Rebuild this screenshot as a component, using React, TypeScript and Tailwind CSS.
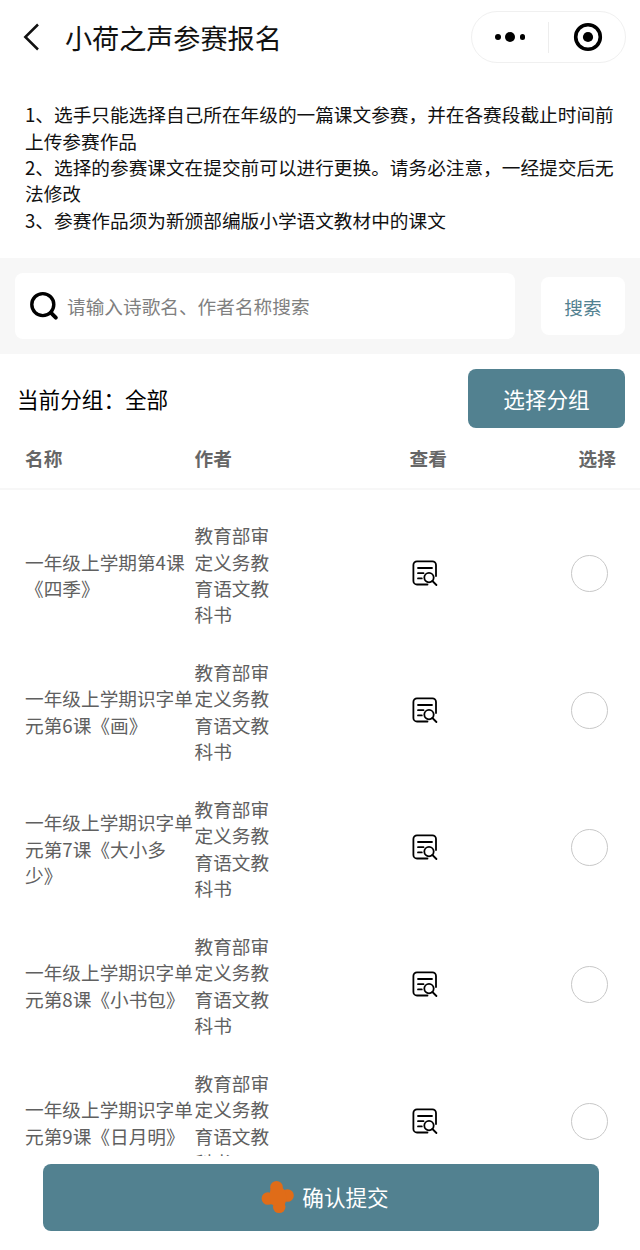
import React from 'react';

type Lesson = { name: string; author: string };

const author = '教育部审定义务教育语文教科书';

const lessons: Lesson[] = [
  { name: '一年级上学期第4课《四季》', author },
  { name: '一年级上学期识字单元第6课《画》', author },
  { name: '一年级上学期识字单元第7课《大小多少》', author },
  { name: '一年级上学期识字单元第8课《小书包》', author },
  { name: '一年级上学期识字单元第9课《日月明》', author },
];

function ViewIcon() {
  return (
    <svg width="26" height="26" viewBox="0 0 26 26" fill="none" stroke="#000" strokeWidth="1.8" strokeLinecap="round">
      <path d="M15.500 24.500H5a3.600 3.600 0 0 1-3.600-3.600V5A3.600 3.600 0 0 1 5 1.400h15.400A3.600 3.600 0 0 1 24 5v11" />
      <path d="M6 8h14M6 13.200h5.500M6 18.400h3.800" />
      <circle cx="17" cy="17.600" r="4.700" />
      <path d="M20.400 21l4 4" />
    </svg>
  );
}

function Row({ lesson }: { lesson: Lesson }) {
  return (
    <li className="flex h-[136.900px] shrink-0 items-center pl-[25px]">
      <div className="w-[169.500px] shrink-0">{lesson.name}</div>
      <div className="w-[76px] shrink-0">{lesson.author}</div>
      <button className="mb-[3px] ml-[141px] shrink-0" aria-label="查看">
        <ViewIcon />
      </button>
      <button className="mb-[3px] ml-[133px] size-[37px] shrink-0 rounded-full border-[1.500px] border-[#c8c8c8]" aria-label="选择" />
    </li>
  );
}

export default function App() {
  return (
    <div className="flex h-[1250px] w-[640px] flex-col overflow-hidden bg-white font-['Noto_Sans_CJK_SC',sans-serif] text-[18.670px] leading-[26.350px] text-black [text-spacing-trim:space-all]">
      <header className="flex h-[74px] shrink-0 items-center pl-[22px] pr-[14px]">
        <svg width="20" height="30" viewBox="0 0 20 30" fill="none" stroke="#111" strokeWidth="2.500">
          <path d="M16 2.500L3.300 15L16 27.500" />
        </svg>
        <h1 className="ml-[23px] pt-[1px] text-[27.100px] leading-[40px] text-[#111]">小荷之声参赛报名</h1>
        <div className="ml-auto flex h-[52px] w-[155px] items-center rounded-full border border-[#f0f0f0]">
          <div className="flex w-[76px] items-center justify-center gap-[4.500px]">
            <i className="size-[5.500px] rounded-full bg-black" />
            <i className="size-[10px] rounded-full bg-black" />
            <i className="size-[5.500px] rounded-full bg-black" />
          </div>
          <div className="h-[31px] w-px bg-[#ededed]" />
          <div className="flex flex-1 justify-center pl-[2px]">
            <svg width="30" height="30" viewBox="0 0 30 30">
              <circle cx="15" cy="15" r="12.300" fill="none" stroke="#000" strokeWidth="3.600" />
              <circle cx="15" cy="15" r="5.100" />
            </svg>
          </div>
        </div>
      </header>

      <section className="h-[183.500px] shrink-0 pl-[25px] pr-[20px] pt-[27.200px] text-[#111]">
        <p>1、选手只能选择自己所在年级的一篇课文参赛，并在各赛段截止时间前上传参赛作品</p>
        <p>2、选择的参赛课文在提交前可以进行更换。请务必注意，一经提交后无法修改</p>
        <p>3、参赛作品须为新颁部编版小学语文教材中的课文</p>
      </section>

      <section className="flex h-[96px] shrink-0 items-center justify-between bg-[#f7f7f7] pl-[15px] pr-[15px]">
        <div className="flex h-[66px] w-[500px] items-center rounded-[8px] bg-white pl-[14px]">
          <svg width="30" height="30" viewBox="0 0 30 30" fill="none" stroke="#000" strokeLinecap="round">
            <circle cx="13.800" cy="13.600" r="11" strokeWidth="3.400" />
            <path d="M21.800 21.600l5 5" strokeWidth="4" />
          </svg>
          <span className="ml-[8px] pt-[1px] text-[#808080]">请输入诗歌名、作者名称搜索</span>
        </div>
        <button className="h-[58px] w-[84px] rounded-[8px] bg-white pt-[3px] text-[#528190]">搜索</button>
      </section>

      <section className="flex h-[74.500px] shrink-0 items-end justify-between pl-[17px] pr-[15px]">
        <div className="flex h-[59px] items-center pt-[2px] text-[21.600px]">当前分组：全部</div>
        <button className="h-[59px] w-[157px] rounded-[8px] bg-[#528190] pt-[2px] text-[21.600px] text-white">选择分组</button>
      </section>

      <div className="flex h-[62px] shrink-0 items-center border-b-2 border-[#f7f7f7] pl-[25px] font-bold text-[#666]">
        <div className="w-[169.500px]">名称</div>
        <div className="w-[215px]">作者</div>
        <div className="w-[169px]">查看</div>
        <div>选择</div>
      </div>

      <ul className="flex h-[666px] shrink-0 flex-col overflow-hidden pt-[16.500px] text-[#606060]">
        {lessons.map((lesson) => (
          <Row key={lesson.name} lesson={lesson} />
        ))}
      </ul>

      <footer className="flex shrink-0 pl-[43px] pt-[7.500px]">
        <button className="flex h-[67px] w-[556px] items-center justify-center rounded-[8px] bg-[#528190] pl-[8px] text-[21.600px] text-white">
          <svg className="mr-[8px]" width="33" height="34" viewBox="0 0 33 34" fill="#e06c18">
            <circle cx="15.500" cy="7.300" r="6.300" />
            <circle cx="26.500" cy="15.500" r="6.300" />
            <circle cx="18.200" cy="26.800" r="6.300" />
            <circle cx="6.900" cy="18.500" r="6.300" />
            <path d="M9.500 9l12-1 3 3 1 9-2 5-9 1-5-2-1-9z" />
          </svg>
          确认提交
        </button>
      </footer>
    </div>
  );
}
